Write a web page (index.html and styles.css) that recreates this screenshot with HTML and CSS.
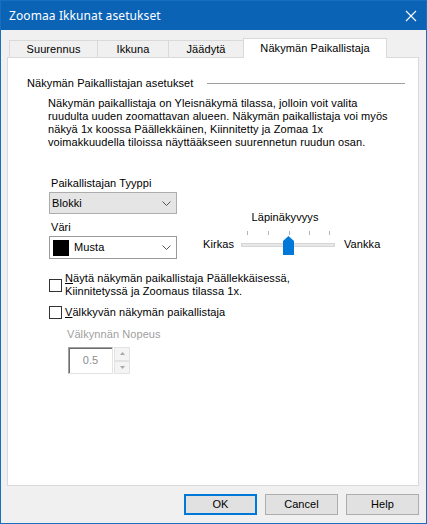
FILE: index.html
```html
<!DOCTYPE html>
<html>
<head>
<meta charset="utf-8">
<link rel="stylesheet" href="styles.css">
</head>
<body>
<div class="window">
  <div class="titlebar">
    <span class="title">Zoomaa Ikkunat asetukset</span>
    <svg class="close" width="12" height="12" viewBox="0 0 12 12"><path d="M1 1 L11 11 M11 1 L1 11" stroke="#fff" stroke-width="1.1" fill="none"/></svg>
  </div>
  <div class="client">
    <div class="tabs">
      <div class="tab t1">Suurennus</div>
      <div class="tab t2">Ikkuna</div>
      <div class="tab t3">Jäädytä</div>
      <div class="tab active">Näkymän Paikallistaja</div>
    </div>
    <div class="panel">
      <div class="group-head"><span>Näkymän Paikallistajan asetukset</span><div class="rule"></div></div>
      <p class="desc">Näkymän paikallistaja on Yleisnäkymä tilassa, jolloin voit valita<br>ruudulta uuden zoomattavan alueen. Näkymän paikallistaja voi myös<br>näkyä 1x koossa Päällekkäinen, Kiinnitetty ja Zomaa 1x<br>voimakkuudella tiloissa näyttääkseen suurennetun ruudun osan.</p>
      <div class="options">
        <div class="left">
          <div class="label">Paikallistajan Tyyppi</div>
          <div class="combo list"><span class="ctext">Blokki</span><svg class="chev" width="9" height="5" viewBox="0 0 9 5"><path d="M0.5 0.5 L4.5 4.5 L8.5 0.5" stroke="#555" fill="none"/></svg></div>
          <div class="label l2">Väri</div>
          <div class="combo edit"><span class="swatch"></span><span class="ctext">Musta</span><svg class="chev" width="9" height="5" viewBox="0 0 9 5"><path d="M0.5 0.5 L4.5 4.5 L8.5 0.5" stroke="#555" fill="none"/></svg></div>
        </div>
        <div class="slider-box">
          <div class="slabel">Läpinäkyvyys</div>
          <span class="kirkas">Kirkas</span>
          <svg class="slider" width="100" height="26" viewBox="0 0 100 26">
            <rect x="3.5" y="12.5" width="93" height="3" fill="#e7e7e7" stroke="#d6d6d6"/>
            <g stroke="#b4b4b4">
              <path d="M9.5 0 V4 M30.5 0 V4 M51.5 0 V4 M71.5 0 V4 M91.5 0 V4"/>
            </g>
            <polygon points="45,10 50.5,5 56,10 56,24 45,24" fill="#0078d7"/>
          </svg>
          <span class="vankka">Vankka</span>
        </div>
      </div>
      <div class="check c1"><span class="box"></span><span class="ctx"><u>N</u>äytä näkymän paikallistaja Päällekkäisessä,<br>Kiinnitetyssä ja Zoomaus tilassa 1x.</span></div>
      <div class="check c2"><span class="box"></span><span class="ctx"><u>V</u>älkkyvän näkymän paikallistaja</span></div>
      <div class="disabled-label">Välkynnän Nopeus</div>
      <div class="spin">
        <div class="spin-edit">0.5</div>
        <div class="spin-btns">
          <div class="sbtn"><svg width="5" height="3" viewBox="0 0 5 3"><polygon points="0,3 2.5,0 5,3" fill="#a8a8a8"/></svg></div>
          <div class="sbtn"><svg width="5" height="3" viewBox="0 0 5 3"><polygon points="0,0 2.5,3 5,0" fill="#a8a8a8"/></svg></div>
        </div>
      </div>
    </div>
    <div class="buttons">
      <div class="btn default">OK</div>
      <div class="btn">Cancel</div>
      <div class="btn">Help</div>
    </div>
  </div>
</div>
</body>
</html>
```
FILE: styles.css
```css
html, body {
  margin: 0;
  padding: 0;
  background: #f0f0f0;
}
body {
  font-family: "Liberation Sans", Arial, sans-serif;
  font-size: 11px;
  line-height: 13px;
  letter-spacing: 0.08px;
  color: #000;
}
.window {
  width: 427px;
  height: 524px;
  box-sizing: border-box;
  border: 1px solid #1a6ec0;
  background: #f0f0f0;
  display: flex;
  flex-direction: column;
}
.titlebar {
  height: 29px;
  background: #0b63b6;
  display: flex;
  align-items: center;
  justify-content: space-between;
  padding: 0 9px 0 8px;
  color: #fff;
}
.title {
  font-family: "Noto Sans", "Open Sans", sans-serif;
  font-size: 12px;
  letter-spacing: 0.1px;
}
.close {
  display: block;
}
.client {
  flex: 1;
  display: flex;
  flex-direction: column;
}
.tabs {
  margin-top: 8px;
  height: 20px;
  padding-left: 8px;
  display: flex;
  align-items: flex-start;
  position: relative;
  z-index: 1;
}
.tab {
  box-sizing: border-box;
  margin-top: 2px;
  height: 17px;
  border: 1px solid #d9d9d9;
  border-bottom: none;
  border-right: none;
  background: #f0f0f0;
  text-align: center;
  line-height: 16px;
}
.t1 { width: 88px; }
.t2 { width: 71px; }
.t3 { width: 75px; }
.tab.active {
  margin-top: 0;
  height: 20px;
  width: 144px;
  background: #fff;
  border-right: 1px solid #d9d9d9;
  line-height: 18px;
}
.panel {
  margin: -1px 0 0 6px;
  width: 412px;
  height: 429px;
  box-sizing: border-box;
  border: 1px solid #d9d9d9;
  background: #fff;
  padding: 19px 13px 0 19px;
}
.group-head {
  display: flex;
  align-items: center;
}
.rule {
  flex: 1;
  height: 1px;
  background: #a0a0a0;
  margin-left: 14px;
}
.desc {
  margin: 7px 0 0 21px;
  white-space: nowrap;
}
.options {
  display: flex;
  align-items: flex-start;
  margin: 28px 0 0 22px;
}
.left {
  width: 128px;
}
.label {
  padding-left: 2px;
}
.label.l2 {
  margin-top: 7px;
}
.combo {
  margin-top: 2px;
  box-sizing: border-box;
  display: flex;
  align-items: center;
}
.combo.list {
  height: 22px;
  background: #e5e5e5;
  border: 1px solid #adadad;
  padding-left: 2px;
}
.combo.edit {
  height: 23px;
  background: #fff;
  border: 1px solid #9a9a9a;
  padding-left: 3px;
}
.ctext {
  flex: 1;
}
.swatch {
  width: 16px;
  height: 16px;
  background: #000;
  margin-right: 5px;
}
.chev {
  margin-right: 5px;
  display: block;
}
.slider-box {
  margin: 34px 0 0 26px;
  display: grid;
  grid-template-columns: 35px 100px auto;
  row-gap: 7px;
  align-items: center;
}
.slabel {
  grid-column: 2;
  grid-row: 1;
  justify-self: center;
  margin-right: 6px;
}
.kirkas { grid-column: 1; grid-row: 2; }
.slider { grid-column: 2; grid-row: 2; display: block; }
.vankka { grid-column: 3; grid-row: 2; padding-left: 6px; }
.check {
  display: flex;
  align-items: center;
  margin-left: 22px;
}
.check.c1 { margin-top: 13px; }
.check.c2 { margin-top: 8px; }
.box {
  width: 13px;
  height: 13px;
  box-sizing: border-box;
  border: 1px solid #333;
  background: #fff;
  margin-right: 3px;
  flex: none;
}
.ctx {
  white-space: nowrap;
}
.ctx u {
  text-decoration-thickness: 1px;
  text-underline-offset: 1px;
}
.disabled-label {
  margin: 9px 0 0 40px;
  color: #a0a0a0;
}
.spin {
  margin: 6px 0 0 41px;
  display: flex;
}
.spin-edit {
  width: 45px;
  height: 27px;
  box-sizing: border-box;
  border-top: 1px solid #a0a0a0;
  border-left: 1px solid #a0a0a0;
  border-right: 1px solid #e3e3e3;
  border-bottom: 1px solid #e3e3e3;
  box-shadow: inset 1px 1px 0 #6d6d6d;
  color: #8d8d8d;
  display: flex;
  align-items: center;
  justify-content: center;
}
.spin-btns {
  width: 16px;
  height: 27px;
  margin-left: 1px;
  display: flex;
  flex-direction: column;
}
.sbtn {
  flex: 1;
  box-sizing: border-box;
  border: 1px solid #e3e3e3;
  background: #f4f4f4;
  display: flex;
  align-items: center;
  justify-content: center;
}
.sbtn svg { display: block; }
.buttons {
  margin-top: 8px;
  padding-right: 7px;
  display: flex;
  justify-content: flex-end;
  gap: 8px;
}
.btn {
  width: 73px;
  height: 21px;
  box-sizing: border-box;
  border: 1px solid #adadad;
  background: #e1e1e1;
  display: flex;
  align-items: center;
  justify-content: center;
}
.btn.default {
  border-color: #0078d7;
  box-shadow: inset 0 0 0 1px #0078d7;
}
```
